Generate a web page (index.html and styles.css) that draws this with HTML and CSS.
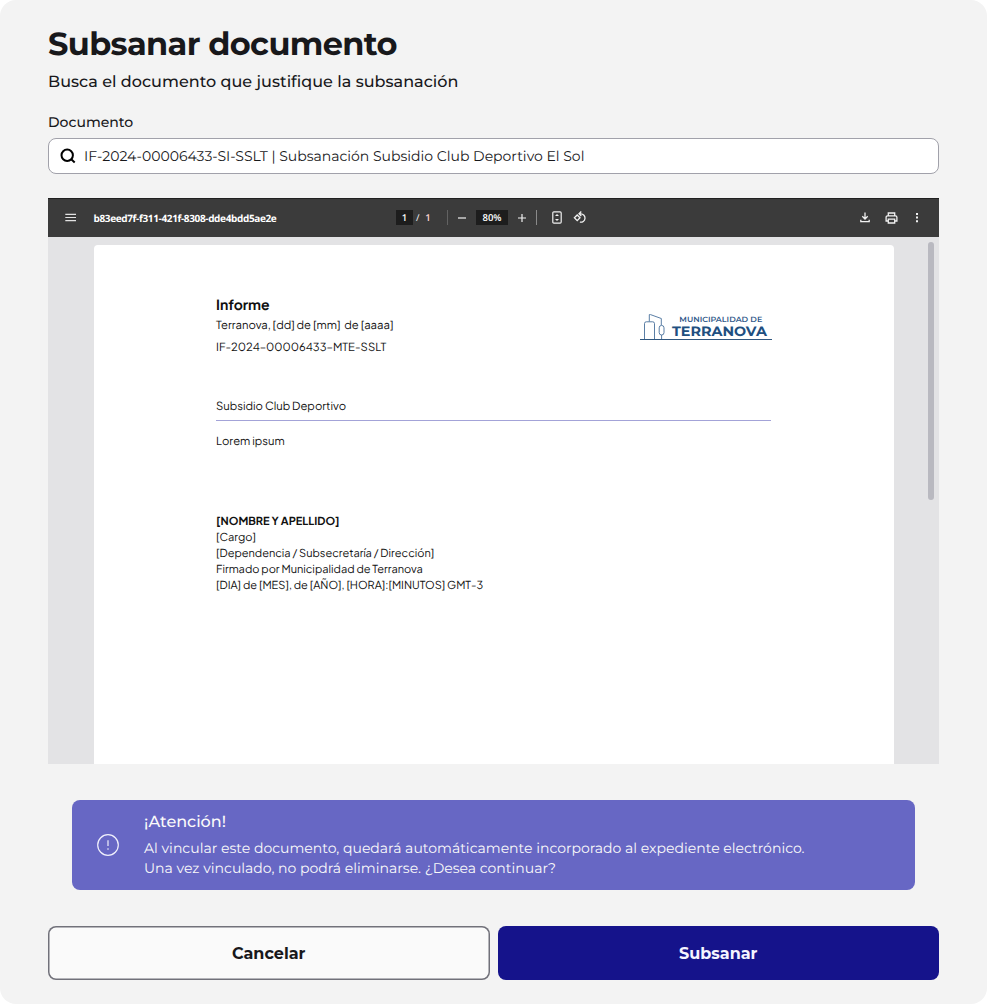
FILE: index.html
```html
<!DOCTYPE html>
<html lang="es">
<head>
<meta charset="utf-8">
<title>Subsanar documento</title>
<link rel="stylesheet" href="styles.css">
</head>
<body>
<main class="dialog">
  <h1 class="title"><span>Subsanar documento</span></h1>
  <p class="subtitle"><span>Busca el documento que justifique la subsanación</span></p>
  <div class="label"><span>Documento</span></div>
  <div class="search">
    <svg class="search-icon" width="16" height="16" viewBox="0 0 16 16" fill="none" stroke="#000" stroke-width="2"><circle cx="7.2" cy="7.2" r="5.7"/><path d="M11 11l3.7 3.4"/></svg>
    <span class="search-text">IF-2024-00006433-SI-SSLT | Subsanación Subsidio Club Deportivo El Sol</span>
  </div>

  <section class="viewer">
    <header class="toolbar">
      <div class="tb-left">
        <svg width="12" height="9" viewBox="0 0 12 9" stroke="#e2e2e2" stroke-width="1.2"><path d="M.3 1.4h10.7M.3 4.5h10.7M.3 7.6h10.7"/></svg>
        <span class="file-name">b83eed7f-f311-421f-8308-dde4bdd5ae2e</span>
      </div>
      <div class="tb-center">
        <span class="page-box">1</span>
        <span class="slash">/</span>
        <span class="page-total">1</span>
        <i class="divider"></i>
        <svg class="minus" width="10" height="10" viewBox="0 0 10 10" stroke="#f1f1f1" stroke-width="1.2"><path d="M1 5h8"/></svg>
        <span class="zoom-box">80%</span>
        <svg class="plus" width="10" height="10" viewBox="0 0 10 10" stroke="#f1f1f1" stroke-width="1.2"><path d="M1 5h8M5 1v8"/></svg>
        <i class="divider divider-wide"></i>
        <svg class="fit" width="10" height="13" viewBox="0 0 10 13" fill="none" stroke="#f1f1f1" stroke-width="1.2"><rect x=".8" y=".8" width="8.4" height="11.4" rx="1.1"/><path d="M3 5.1L5 3l2 2.1zM3 7.9L5 10l2-2.1z" fill="#f1f1f1" stroke="none"/></svg>
        <svg class="rotate" width="14" height="13" viewBox="0 0 14 13" fill="none" stroke="#f1f1f1" stroke-width="1.3"><path d="M4.2 4L7 6.8 4.2 9.6 1.4 6.8z"/><path d="M6.2 2.8h1.6a4.2 4.2 0 1 1-.9 8.3M8.3.5L6 2.8l2.3 2.3"/></svg>
      </div>
      <div class="tb-right">
        <svg width="10" height="11" viewBox="0 0 10 11" fill="none" stroke="#f1f1f1" stroke-width="1.3"><path d="M5 .5v6.2M2.3 4.3L5 7l2.7-2.7M.8 7.8v1.9h8.4V7.8"/></svg>
        <svg class="print" width="13" height="12" viewBox="0 0 13 12" fill="none" stroke="#f1f1f1" stroke-width="1.3"><path d="M3.3 3.7V1h6.4v2.7M3.3 9H1.1V5.3q0-1.5 1.5-1.5h7.8q1.5 0 1.5 1.5V9H9.7M3.3 7.2h6.4V11H3.3z"/></svg>
        <svg class="dots" width="4" height="11" viewBox="0 0 4 11" fill="#f1f1f1"><path d="M1 1h2v2H1zM1 4.6h2v2H1zM1 8.2h2v2H1z"/></svg>
      </div>
    </header>
    <div class="canvas">
      <article class="sheet">
        <div class="sheet-head">
          <div>
            <h2 class="doc-title"><span>Informe</span></h2>
            <p class="doc-line date">Terranova, [dd] de [mm]&nbsp; de [aaaa]</p>
            <p class="doc-line code">IF-2024–00006433–MTE-SSLT</p>
          </div>
          <svg class="logo" width="133" height="30" viewBox="0 0 133 30">
            <g fill="none" stroke="#476f9b" stroke-width=".9"><path d="M4.5 28V11.6q0-1.8 1.8-1.8h6.4q1.8 0 1.8 1.8V28M9.3 9.5V2.6h1.2l10.8 3.9v6.5"/><rect x="19.2" y="13.4" width="4.8" height="9.6" rx="2.4"/><path d="M21.6 23v5"/></g>
            <path d="M0 27.5h132" stroke="#31577f" stroke-width="1"/>
            <text class="logo-small" x="39.3" y="10.3" textLength="83" lengthAdjust="spacingAndGlyphs">MUNICIPALIDAD DE</text>
            <text class="logo-big" x="32" y="24" textLength="95" lengthAdjust="spacingAndGlyphs">TERRANOVA</text>
          </svg>
        </div>
        <p class="subject doc-line"><span>Subsidio Club Deportivo</span></p>
        <p class="body-text doc-line"><span>Lorem ipsum</span></p>
        <div class="signature">
          <p class="signer">[NOMBRE Y APELLIDO]</p>
          <p class="role">[Cargo]</p>
          <p class="dept">[Dependencia / Subsecretaría / Dirección]</p>
          <p class="signed">Firmado por Municipalidad de Terranova</p>
          <p class="stamp">[DIA] de [MES], de [AÑO], [HORA]:[MINUTOS] GMT-3</p>
        </div>
      </article>
      <div class="thumb"></div>
    </div>
  </section>

  <aside class="alert">
    <svg width="24" height="24" viewBox="0 0 24 24" fill="none" stroke="#f0f0fc" stroke-width="1.2"><circle cx="12" cy="12" r="10.3"/><path d="M12 7.3v5.8M12 15.2v1.5"/></svg>
    <div>
      <h3 class="alert-title">¡Atención!</h3>
      <p class="alert-text alert-first">Al vincular este documento, quedará automáticamente incorporado al expediente electrónico.</p>
      <p class="alert-text alert-second">Una vez vinculado, no podrá eliminarse. ¿Desea continuar?</p>
    </div>
  </aside>

  <footer class="actions">
    <button class="btn cancel">Cancelar</button>
    <button class="btn confirm">Subsanar</button>
  </footer>
</main>
</body>
</html>
```
FILE: styles.css
```css
* { box-sizing: border-box; margin: 0; padding: 0; }
body { background: #fff; font-family: Montserrat, Inter, sans-serif; color: #18181b; white-space: nowrap; text-rendering: geometricPrecision; }
svg { display: block; flex: none; }
.dialog { width: 987px; height: 1004px; padding: 25px 48px 24px; background: #f3f3f3; border-radius: 16px; }
.title { font-size: 32px; line-height: 40px; font-weight: 700; letter-spacing: -.63px; }
.subtitle { margin-top: 6px; font-size: 16px; line-height: 24px; font-weight: 500; letter-spacing: .03px; }
.label { margin-top: 17px; font-size: 14px; line-height: 20px; font-weight: 500; }
.search { height: 36px; margin-top: 6px; padding: 0 11px; display: flex; align-items: center; gap: 8px; background: #fff; border: 1px solid #a1a1aa; border-radius: 8px; }
.search-text { font-size: 14px; font-weight: 400; }

.viewer { height: 566px; margin-top: 24px; background: #e3e3e5; }
.toolbar { height: 39px; padding: 0 20px 1px 17px; display: grid; grid-template-columns: 331px 1fr auto; align-items: center; background: #3b3b3b; border-top: 1px solid #202020; color: #fff; font-family: "Segoe UI", "Open Sans", sans-serif; font-size: 9.5px; }
.tb-left, .tb-center, .tb-right { display: flex; align-items: center; }
.file-name { margin-left: 16.5px; font-weight: 700; font-size: 10px; letter-spacing: -.36px; }
.page-box, .zoom-box { height: 15px; line-height: 15px; background: #1d1d1d; text-align: center; font-weight: 600; }
.page-box { width: 17px; }
.zoom-box { width: 32px; margin-left: 9px; }
.slash { margin-left: 3px; width: 6px; }
.page-total { margin-left: 3px; width: 6px; text-align: center; font-weight: 600; color: #ffd8d4; }
.divider { width: 1px; height: 15px; margin-left: 16px; background: #626262; }
.minus { margin-left: 9px; }
.plus { margin-left: 9px; }
.divider-wide { margin-left: 9px; background: #8a8a8a; }
.fit { margin-left: 15px; }
.rotate { margin-left: 11px; }
.print { margin-left: 15px; }
.dots { margin-left: 17px; }

.canvas { position: relative; height: 527px; padding: 8px 45.5px 0; }
.sheet { height: 519px; padding: 50px 122px 0 122.5px; background: #fff; border-radius: 4px 4px 0 0; color: #111; font-family: "Plus Jakarta Sans", Inter, sans-serif; }
.thumb { position: absolute; top: 5px; right: 5px; width: 6px; height: 258px; border-radius: 3px; background: #b9b9c0; }
.sheet-head { display: flex; justify-content: space-between; height: 103px; }
.logo { margin: 17px -1px 0 0; }
.logo-small { font: 600 7.5px Montserrat, Inter, sans-serif; fill: #31598a; }
.logo-big { font: 700 13.5px Montserrat, Inter, sans-serif; fill: #214f80; }
.doc-title { font-size: 14px; line-height: 20px; font-weight: 700; }
.doc-line { font-size: 11.25px; line-height: 16px; font-weight: 400; }
.date { margin-top: 2px; }
.code { margin-top: 6px; }
.subject { height: 23px; border-bottom: 1px solid #a3a3d8; width: 555px; }
.body-text { margin-top: 12px; }
.signature { margin-top: 65px; font-size: 11px; line-height: 16px; font-weight: 400; }
.signer { font-weight: 700; }

.alert { height: 90px; margin: 36px 24px 0; padding: 0 24px; display: flex; align-items: center; gap: 24px; background: #6767c4; border-radius: 8px; color: #fafafa; }
.alert-title { font-size: 16px; line-height: 24px; font-weight: 500; margin: -2px 0 3px; }
.alert-text { font-size: 14px; line-height: 20px; font-weight: 400; letter-spacing: .01px; }
.actions { display: grid; grid-template-columns: 1fr 1fr; gap: 8px; margin-top: 36px; }
.btn { height: 54px; border-radius: 8px; border: 0; font: 700 16px Montserrat, Inter, sans-serif; }
.cancel { background: #fafafa; box-shadow: inset 0 0 0 1.5px #71717a; color: #18181b; }
.confirm { background: #15138b; color: #f4f4ff; }
```
